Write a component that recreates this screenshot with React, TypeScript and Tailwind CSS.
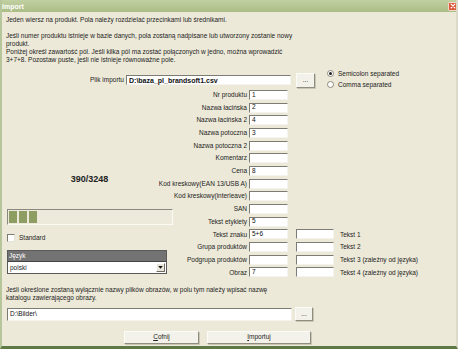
import React from 'react';

const FONT = { fontFamily: '"Liberation Sans", Arial, sans-serif' };

type Field = { label: string; value?: string; extra?: string };

const fields: Field[] = [
  { label: 'Nr produktu', value: '1' },
  { label: 'Nazwa łacińska', value: '2' },
  { label: 'Nazwa łacińska 2', value: '4' },
  { label: 'Nazwa potoczna', value: '3' },
  { label: 'Nazwa potoczna 2' },
  { label: 'Komentarz' },
  { label: 'Cena', value: '8' },
  { label: 'Kod kreskowy(EAN 13/USB A)' },
  { label: 'Kod kreskowy(interleave)' },
  { label: 'SAN' },
  { label: 'Tekst etykiety', value: '5' },
  { label: 'Tekst znaku', value: '5+6', extra: 'Tekst 1' },
  { label: 'Grupa produktów', extra: 'Tekst 2' },
  { label: 'Podgrupa produktów', extra: 'Tekst 3 (zależny od języka)' },
  { label: 'Obraz', value: '7', extra: 'Tekst 4 (zależny od języka)' },
];

function Edit({ value, className = '', bold = false }: { value?: string; className?: string; bold?: boolean }) {
  return (
    <div
      className={`h-[10px] bg-white border-t border-l border-t-[#7d7c74] border-l-[#7d7c74] border-b border-r border-b-[#f4f3ee] border-r-[#f4f3ee] flex items-center pl-[2px] text-[6.5px] leading-none text-[#111] ${bold ? 'font-bold text-[7px]' : ''} ${className}`}
    >
      {value}
    </div>
  );
}

function XpButton({ children, className = '' }: { children?: React.ReactNode; className?: string }) {
  return (
    <div
      className={`flex items-center justify-center bg-[#f3f2ea] border border-t-[#fbfbf8] border-l-[#fbfbf8] border-b-[#8f8d80] border-r-[#8f8d80] rounded-[1px] text-[6.5px] text-[#222] shadow-[1px_1px_0_#c9c6b4] ${className}`}
    >
      {children}
    </div>
  );
}

function Radio({ checked, label }: { checked?: boolean; label: string }) {
  return (
    <div className="flex items-center gap-[4px] h-[11px]">
      <div className="w-[7px] h-[7px] rounded-full bg-white border border-[#8d8b7e] flex items-center justify-center">
        {checked && <div className="w-[3px] h-[3px] rounded-full bg-[#222]" />}
      </div>
      <span className="text-[6.5px] text-[#222] whitespace-nowrap">{label}</span>
    </div>
  );
}

export default function App() {
  return (
    <div style={FONT} className="w-[458px] h-[349px] bg-[#ECE9D8] flex flex-col border-l-2 border-l-[#b7c69a] border-r-2 border-r-[#dcd9c8] border-b-[3px] border-b-[#5e7946] overflow-hidden">
      {/* title bar */}
      <div className="h-[12px] shrink-0 bg-gradient-to-b from-[#c2d0a2] to-[#abbd85] flex items-center justify-between pl-[2px] pr-[1px] -ml-[2px] -mr-[2px]">
        <span className="text-[7px] font-bold text-white leading-none">Import</span>
        <div className="w-[9px] h-[9px] bg-[#d9593a] border border-[#f0d8c8] rounded-[1px] flex items-center justify-center">
          <svg viewBox="0 0 8 8" className="w-[6px] h-[6px]">
            <path d="M1.5 1.5 L6.5 6.5 M6.5 1.5 L1.5 6.5" stroke="#fff" strokeWidth="1.6" strokeLinecap="round" />
          </svg>
        </div>
      </div>

      <div className="flex flex-col pl-[4px] text-[6.5px] text-[#1c1c1c]">
        {/* intro */}
        <div className="mt-[4px] leading-[8px] whitespace-nowrap">
          <div>Jeden wiersz na produkt. Pola należy rozdzielać przecinkami lub średnikami.</div>
          <div className="h-[8px]" />
          <div>Jeśli numer produktu istnieje w bazie danych, pola zostaną nadpisane lub utworzony zostanie nowy</div>
          <div>produkt.</div>
          <div>Poniżej określ zawartość pól. Jeśli kilka pól ma zostać połączonych w jedno, można wprowadzić</div>
          <div>3+7+8. Pozostaw puste, jeśli nie istnieje równoważne pole.</div>
        </div>

        {/* plik importu */}
        <div className="mt-[8px] h-[16px] flex items-center">
          <div className="w-[120px] flex justify-end pr-[2px] whitespace-nowrap">Plik importu</div>
          <Edit value="D:\baza_pl_brandsoft1.csv" bold className="w-[165px]" />
          <XpButton className="ml-[5px] w-[19px] h-[15px]">...</XpButton>
          <div className="ml-[12px] flex flex-col -mt-[2px]">
            <Radio checked label="Semicolon separated" />
            <Radio label="Comma separated" />
          </div>
        </div>

        {/* middle */}
        <div className="flex">
          <div className="w-[166px] shrink-0 flex flex-col pl-[1px]">
            <div className="mt-[87px] h-[10px] flex justify-center items-center font-bold text-[9px] text-[#222]">390/3248</div>
            <div className="mt-[24px] h-[16px] w-[166px] border border-t-[#8a897f] border-l-[#8a897f] border-b-[#fbfbf6] border-r-[#fbfbf6] bg-[#edeadb] flex items-center gap-[2px] px-[1px]">
              <div className="w-[8px] h-[12px] bg-[#8e9e63]" />
              <div className="w-[8px] h-[12px] bg-[#8e9e63]" />
              <div className="w-[8px] h-[12px] bg-[#8e9e63]" />
            </div>
            <div className="mt-[9px] flex items-center gap-[4px] h-[8px]">
              <div className="w-[8px] h-[8px] bg-white border border-t-[#7d7c74] border-l-[#7d7c74] border-b-[#e6e4d8] border-r-[#e6e4d8]" />
              <span>Standard</span>
            </div>
            <div className="mt-[8px] w-[160px] border border-[#5a5a5a] flex flex-col">
              <div className="h-[10px] bg-[#737373] text-white flex items-center pl-[1px] leading-none">Język</div>
              <div className="h-[12px] bg-white flex items-center justify-between pl-[2px] pr-[1px] border-t border-[#444]">
                <span>polski</span>
                <div className="w-[9px] h-[9px] bg-[#e8e6da] border border-t-white border-l-white border-b-[#6f6e66] border-r-[#6f6e66] flex items-center justify-center">
                  <svg viewBox="0 0 6 4" className="w-[5px] h-[3px]">
                    <path d="M0 0 H6 L3 3.5 Z" fill="#111" />
                  </svg>
                </div>
              </div>
            </div>
          </div>

          <div className="flex flex-col mt-[0.5px]">
            {fields.map((f) => (
              <div key={f.label} className="h-[12.7px] flex items-center">
                <div className="w-[77px] flex justify-end pr-[2px] whitespace-nowrap">{f.label}</div>
                <Edit value={f.value} className="w-[39px]" />
                {f.extra && (
                  <>
                    <Edit className="w-[38px] ml-[8px]" />
                    <span className="ml-[6px] whitespace-nowrap">{f.extra}</span>
                  </>
                )}
              </div>
            ))}
          </div>
        </div>

        {/* images path */}
        <div className="mt-[7px] leading-[8px] whitespace-nowrap">
          <div>Jeśli określone zostaną wyłącznie nazwy plików obrazów, w polu tym należy wpisać nazwę</div>
          <div>katalogu zawierającego obrazy.</div>
        </div>
        <div className="mt-[5px] flex items-center h-[15px]">
          <Edit value="D:\Bilder\" className="w-[285px] h-[13px] ml-[1px]" />
          <XpButton className="ml-[3px] w-[18px] h-[14px]">...</XpButton>
        </div>

        <div className="mt-[9px] flex h-[13px]">
          <XpButton className="ml-[118px] w-[75px] h-[13px]">
            <span className="underline">C</span>ofnij
          </XpButton>
          <XpButton className="ml-[8px] w-[104px] h-[13px]">
            <span className="underline">I</span>mportuj
          </XpButton>
        </div>
      </div>
    </div>
  );
}
